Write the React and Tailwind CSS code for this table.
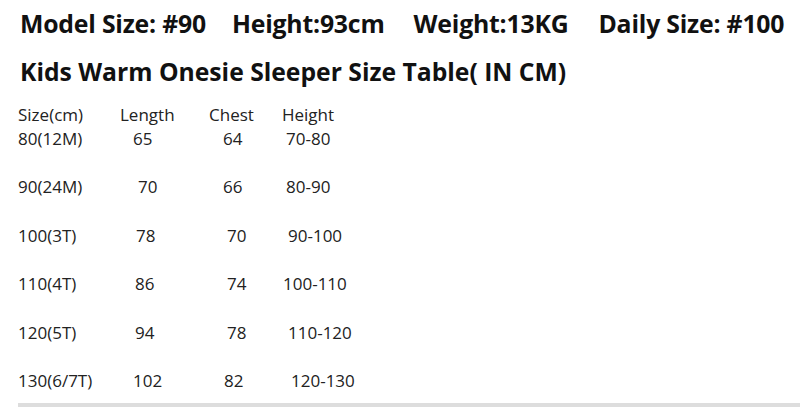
const COLS = "grid grid-cols-[102px_89px_73px_1fr] h-[24px] shrink-0";

const rows = [
  { size: "80(12M)", len: "65", lenC: "pl-[13px]", chest: "64", chestC: "pl-[14px]", h: "70-80", hC: "pl-[4px]" },
  { size: "90(24M)", len: "70", lenC: "pl-[18px]", chest: "66", chestC: "pl-[14px]", h: "80-90", hC: "pl-[4px]" },
  { size: "100(3T)", len: "78", lenC: "pl-[16px]", chest: "70", chestC: "pl-[18px]", h: "90-100", hC: "pl-[6px]" },
  { size: "110(4T)", len: "86", lenC: "pl-[15px]", chest: "74", chestC: "pl-[18px]", h: "100-110", hC: "pl-[1px]" },
  { size: "120(5T)", len: "94", lenC: "pl-[15px]", chest: "78", chestC: "pl-[18px]", h: "110-120", hC: "pl-[6px]" },
  { size: "130(6/7T)", len: "102", lenC: "pl-[13px]", chest: "82", chestC: "pl-[15px]", h: "120-130", hC: "pl-[9px]" },
];

export default function App() {
  return (
    <div className="w-[800px] h-[407px] bg-white overflow-hidden flex flex-col font-['Open_Sans',sans-serif]">
      <div className="shrink-0 pl-[20px] pt-[5px] h-[54px] flex items-start text-[24.8px] font-bold text-[#111] leading-[36px] tracking-[-0.2px] whitespace-nowrap">
        <span>Model Size: #90</span>
        <span className="ml-[26px]">Height:93cm</span>
        <span className="ml-[29px]">Weight:13KG</span>
        <span className="ml-[30px]">Daily Size: #100</span>
      </div>
      <div className="shrink-0 pl-[20px] h-[44px] text-[24.7px] font-bold text-[#111] leading-[36px] whitespace-nowrap">
        Kids Warm Onesie Sleeper Size Table( IN CM)
      </div>
      <div className="shrink-0 pl-[18px] pt-[5px] text-[17px] text-[#222] leading-[24px] flex flex-col">
        <div className={COLS}>
          <div>Size(cm)</div>
          <div>Length</div>
          <div>Chest</div>
          <div>Height</div>
        </div>
        <div className="flex flex-col gap-[24.4px]">
          {rows.map((r) => (
            <div key={r.size} className={COLS}>
              <div>{r.size}</div>
              <div className={r.lenC}>{r.len}</div>
              <div className={r.chestC}>{r.chest}</div>
              <div className={r.hC}>{r.h}</div>
            </div>
          ))}
        </div>
      </div>
      <div className="mt-auto shrink-0 ml-[18px] h-[4px] bg-[#ddd]" />
    </div>
  );
}
